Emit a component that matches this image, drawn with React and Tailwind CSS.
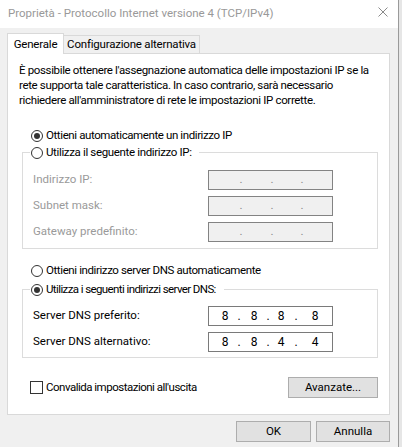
import React from "react";

function Radio({ checked, children, track }) {
  return (
    <div className="flex items-center h-[17px]">
      <span className="flex items-center justify-center w-[12px] h-[12px] rounded-full border border-[#333333] bg-white shrink-0">
        {checked && <span className="w-[6px] h-[6px] rounded-full bg-[#333333]" />}
      </span>
      <span className={"ml-[3px] whitespace-nowrap " + track}>{children}</span>
    </div>
  );
}

function DisabledIp() {
  return (
    <div className="w-[125px] h-[20px] border border-[#838383] bg-[#f0f0f0] flex items-center pl-[30px] text-[#8a8a8a] leading-none">
      <span className="w-[4px] text-center">.</span>
      <span className="w-[4px] text-center ml-[27px]">.</span>
      <span className="w-[4px] text-center ml-[26px]">.</span>
    </div>
  );
}

function Ip({ a, b, c, d }) {
  return (
    <div className="w-[125px] h-[20px] border border-[#7a7a7a] bg-white flex items-center pl-[12px] text-[12px] leading-none">
      <span className="w-[8px] text-center">{a}</span>
      <span className="w-[4px] text-center ml-[8px]">.</span>
      <span className="w-[8px] text-center ml-[9px]">{b}</span>
      <span className="w-[4px] text-center ml-[8px]">.</span>
      <span className="w-[8px] text-center ml-[7px]">{c}</span>
      <span className="w-[4px] text-center ml-[9px]">.</span>
      <span className="w-[8px] text-center ml-[13px]">{d}</span>
    </div>
  );
}

function Row({ label, children, disabled }) {
  return (
    <div className="flex items-center h-[20px]">
      <span className={disabled ? "w-[175px] text-[#9a9a9a]" : "w-[175px]"}>{label}</span>
      {children}
    </div>
  );
}

function Button({ children, className }) {
  return (
    <div className={"h-[21px] bg-[#e1e1e1] border border-[#adadad] flex items-center justify-center " + className}>
      {children}
    </div>
  );
}

export default function App() {
  return (
    <div className="w-[402px] h-[447px] overflow-hidden bg-[#e6e6e6] flex text-[11.5px] text-black font-['Roboto',sans-serif]">
      <div className="w-[399px] h-full flex flex-col bg-[#f0f0f0] border-r border-[#9a9a9a]">
        {/* Title bar */}
        <div className="h-[28px] shrink-0 bg-white flex items-center justify-between pl-[8px] pr-[10px]">
          <span className="text-[#999999] text-[11.5px] whitespace-nowrap">
            Proprietà - Protocollo Internet versione 4 (TCP/IPv4)
          </span>
          <svg width="10" height="10" viewBox="0 0 10 10" className="mb-[5px]">
            <path d="M0.5 0.5 L9.5 9.5 M9.5 0.5 L0.5 9.5" stroke="#8a8a8a" strokeWidth="1" fill="none" />
          </svg>
        </div>

        {/* Body */}
        <div className="flex-1 flex flex-col pt-[5px] pl-[7px] pr-[8px]">
          {/* Tabs */}
          <div className="flex items-end h-[20px]">
            <div className="relative z-10 w-[57px] h-[21px] -mb-px bg-white border-l border-t border-r border-[#d9d9d9] flex items-center justify-center pt-[1px] tracking-[-0.2px]">
              Generale
            </div>
            <div className="w-[137px] h-[18px] -ml-px bg-[#f0f0f0] border-l border-t border-r border-[#d9d9d9] flex items-center justify-center whitespace-nowrap tracking-[-0.2px]">
              Configurazione alternativa
            </div>
          </div>

          {/* Panel */}
          <div className="w-[383px] bg-white border border-[#d9d9d9] flex flex-col pt-[9px] pb-[16px]">
            <div className="pl-[11px] leading-[15px] whitespace-nowrap tracking-[-0.35px]">
              <p>È possibile ottenere l'assegnazione automatica delle impostazioni IP se la</p>
              <p>rete supporta tale caratteristica. In caso contrario, sarà necessario</p>
              <p>richiedere all'amministratore di rete le impostazioni IP corrette.</p>
            </div>

            <div className="mt-[19px] pl-[23px]">
              <Radio checked track="tracking-[-0.4px]">Ottieni automaticamente un indirizzo IP</Radio>
            </div>

            <fieldset className="ml-[14px] mr-[11px] border border-[#dcdcdc] pl-[7px] pr-[43px] pb-[6px]">
              <legend className="pl-px pr-[7px]">
                <Radio track="tracking-[-0.35px]">Utilizza il seguente indirizzo IP:</Radio>
              </legend>
              <div className="pl-[3px] pt-[9px] flex flex-col gap-[6px]">
                <Row label="Indirizzo IP:" disabled><DisabledIp /></Row>
                <Row label="Subnet mask:" disabled><DisabledIp /></Row>
                <Row label="Gateway predefinito:" disabled><DisabledIp /></Row>
              </div>
            </fieldset>

            <div className="mt-[13px] pl-[23px]">
              <Radio track="tracking-[-0.4px]">Ottieni indirizzo server DNS automaticamente</Radio>
            </div>

            <fieldset className="mt-[2px] ml-[14px] mr-[11px] border border-[#dcdcdc] pl-[7px] pr-[43px] pb-[5px]">
              <legend className="pl-px pr-[8px]">
                <Radio checked track="tracking-[-0.6px]">Utilizza i seguenti indirizzi server DNS:</Radio>
              </legend>
              <div className="pl-[3px] pt-[8px] flex flex-col gap-[6px]">
                <Row label="Server DNS preferito:"><Ip a="8" b="8" c="8" d="8" /></Row>
                <Row label="Server DNS alternativo:"><Ip a="8" b="8" c="4" d="4" /></Row>
              </div>
            </fieldset>

            <div className="mt-[19px] pl-[22px] pr-[11px] flex items-center justify-between">
              <div className="flex items-center">
                <span className="w-[13px] h-[13px] border border-[#333333] bg-white" />
                <span className="ml-[3px] tracking-[-0.5px]">Convalida impostazioni all'uscita</span>
              </div>
              <Button className="w-[90px]">Avanzate...</Button>
            </div>
          </div>

          {/* Bottom buttons */}
          <div className="mt-[6px] flex justify-end gap-[5px]">
            <Button className="w-[75px]">OK</Button>
            <Button className="w-[74px]">Annulla</Button>
          </div>
        </div>
      </div>
    </div>
  );
}
